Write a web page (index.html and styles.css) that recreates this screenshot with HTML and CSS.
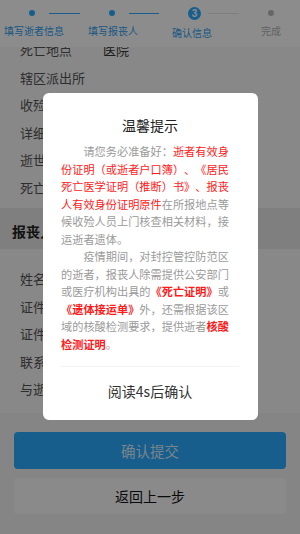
FILE: index.html
```html
<!DOCTYPE html>
<html lang="zh-CN">
<head>
<meta charset="utf-8">
<title>确认信息</title>
<link rel="stylesheet" href="styles.css">
</head>
<body>
<header class="steps">
  <div class="track">
    <span class="dot dot1 on"></span>
    <span class="bar bar1 on"></span>
    <span class="dot dot2 on"></span>
    <span class="bar bar2 on"></span>
    <span class="num">3</span>
    <span class="bar bar3"></span>
    <span class="dot dot4"></span>
  </div>
  <div class="labels">
    <span class="label on">填写逝者信息</span>
    <span class="label on">填写报丧人</span>
    <span class="label on cur">确认信息</span>
    <span class="label">完成</span>
  </div>
</header>

<main class="page">
  <section class="list list-top">
    <div class="row"><span class="k">死亡地点</span><span class="v">医院</span></div>
    <div class="row"><span class="k">辖区派出所</span><span class="v"></span></div>
    <div class="row"><span class="k">收殓地址</span><span class="v"></span></div>
    <div class="row"><span class="k">详细地址</span><span class="v"></span></div>
    <div class="row"><span class="k">逝世时间</span><span class="v"></span></div>
    <div class="row"><span class="k">死亡原因</span><span class="v"></span></div>
  </section>
  <h2 class="band">报丧人</h2>
  <section class="list list-bottom">
    <div class="row"><span class="k">姓名</span><span class="v"></span></div>
    <div class="row"><span class="k">证件类型</span><span class="v"></span></div>
    <div class="row"><span class="k">证件号码</span><span class="v"></span></div>
    <div class="row"><span class="k">联系电话</span><span class="v"></span></div>
    <div class="row"><span class="k">与逝者关系</span><span class="v"></span></div>
  </section>
  <footer class="actions">
    <button class="btn btn-primary">确认提交</button>
    <button class="btn btn-plain">返回上一步</button>
  </footer>
</main>

<div class="mask"></div>

<div class="dialog">
  <h3 class="d-title">温馨提示</h3>
  <div class="d-body">
    <p class="para"><span class="ind"></span>请您务必准备好：<span class="red">逝者有效身<br>份证明（或逝者户口簿）、《居民<br>死亡医学证明（推断）书》、报丧<br>人有效身份证明原件</span>在所报地点等<br>候收殓人员上门核查相关材料，接<br>运逝者遗体。</p>
    <p class="para"><span class="ind"></span>疫情期间，对封控管控防范区<br>的逝者，报丧人除需提供公安部门<br>或医疗机构出具的<b class="red">《死亡证明》</b>或<br><b class="red">《遗体接运单》</b>外，还需根据该区<br>域的核酸检测要求，提供逝者<b class="red">核酸<br>检测证明</b>。</p>
  </div>
  <div class="d-line"></div>
  <div class="d-btn">阅读4s后确认</div>
</div>
</body>
</html>
```

FILE: styles.css
```css
* { box-sizing: border-box; }
html, body {
  margin: 0;
  padding: 0;
}
body {
  width: 300px;
  height: 534px;
  overflow: hidden;
  background: #f2f2f2;
  font-family: "Noto Sans CJK SC", "Noto Sans", sans-serif;
  color: #333;
  text-spacing-trim: space-all;
}

/* steps header */
.steps {
  position: fixed;
  top: 0;
  left: 0;
  width: 300px;
  height: 47px;
  background: #ffffff;
  z-index: 2;
}
.track {
  display: flex;
  align-items: center;
  height: 26px;
}
.dot {
  width: 6px;
  height: 6px;
  border-radius: 50%;
  background: #c4c4c4;
  flex: none;
}
.dot.on { background: #2aabff; }
.dot1 { margin-left: 29px; }
.dot2 { margin-left: 29px; }
.dot4 { margin-left: 29px; background: #b8babd; }
.bar {
  height: 1px;
  background: #dadada;
  flex: none;
}
.bar.on { background: #2aabff; }
.bar1 { margin-left: 14px; width: 31px; }
.bar2 { margin-left: 14px; width: 30px; }
.bar3 { margin-left: 7px; width: 31px; background: #e4e6e8; }
.num {
  margin-left: 29px;
  width: 13px;
  height: 13px;
  border-radius: 50%;
  background: #2aabff;
  color: #fff;
  font-size: 10px;
  line-height: 13px;
  text-align: center;
  font-weight: bold;
  font-family: "Liberation Sans", Arial, sans-serif;
  flex: none;
}
.labels {
  display: flex;
  align-items: flex-start;
  padding-left: 4px;
  gap: 19px;
}
.label {
  width: 60px;
  text-align: center;
  font-size: 10px;
  line-height: 12px;
  color: #b0b3b7;
  white-space: nowrap;
  flex: none;
  margin-top: -1px;
}
.label.on { color: #2f9ff0; }
.label.cur { margin-top: 1px; }

/* page */
.page {
  padding-top: 36px;
}
.list {
  background: #f7f7f7;
}
.list-top { padding-bottom: 7px; }
.list-bottom { padding: 16px 0 10px; }
.row {
  display: flex;
  height: 27.5px;
  align-items: center;
  font-size: 13px;
}
.k {
  width: 103px;
  padding-left: 20px;
  color: #555;
  white-space: nowrap;
}
.v { color: #333; }
.band {
  margin: 0;
  height: 41px;
  padding: 5px 0 0 12px;
  line-height: 36px;
  font-size: 14px;
  font-weight: bold;
  color: #222;
  background: #e7e7e7;
}
.actions {
  display: flex;
  flex-direction: column;
  gap: 9px;
  padding: 19px 14px 0;
  height: 120px;
  background: #f2f2f2;
}
.btn {
  display: block;
  width: 100%;
  border: none;
  border-radius: 4px;
  font-family: inherit;
  font-size: 14px;
  padding: 0;
}
.btn-primary {
  height: 37px;
  background: #2aabff;
  color: rgba(255, 255, 255, 0.85);
  font-size: 14.5px;
}
.btn-plain {
  height: 36px;
  background: #fbfbfb;
  color: #111;
}

/* mask + dialog */
.mask {
  position: fixed;
  inset: 0;
  background: rgba(0, 0, 0, 0.45);
  z-index: 5;
}
.dialog {
  position: fixed;
  left: 43px;
  top: 93px;
  width: 215px;
  height: 327px;
  background: #fff;
  border-radius: 6px;
  z-index: 6;
  padding: 22px 19px 0 18px;
}
.d-title {
  margin: 0 0 8px;
  font-size: 14px;
  font-weight: normal;
  line-height: 20px;
  text-align: center;
  color: #222;
}
.para {
  margin: 0;
  font-size: 11.2px;
  line-height: 17.5px;
  color: #9a9a9a;
  white-space: nowrap;
}
.ind {
  display: inline-block;
  width: 22.4px;
}
.red { color: #ff1a1a; }
b.red { font-weight: bold; }
.d-line {
  margin-top: 13px;
  height: 1px;
  background: #f2f2f2;
}
.d-btn {
  height: 48px;
  line-height: 48px;
  text-align: center;
  font-size: 14px;
  color: #333;
}
```
